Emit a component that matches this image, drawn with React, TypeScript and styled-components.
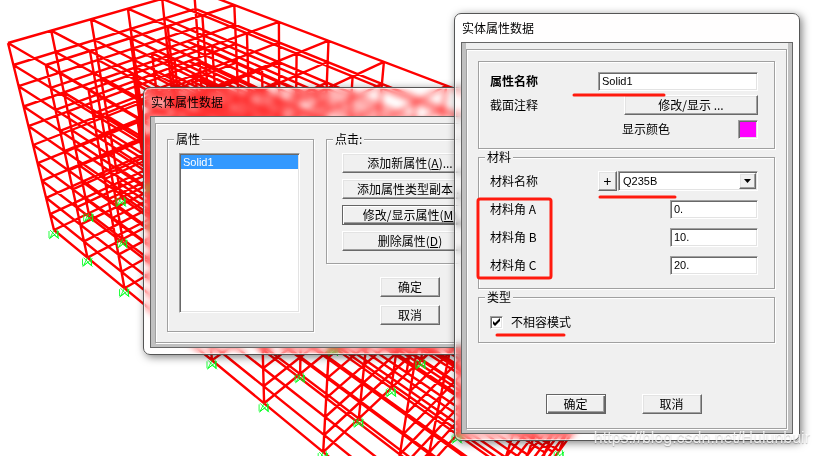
import React from 'react';
import styled, { createGlobalStyle, css } from 'styled-components';

const GlobalStyle = createGlobalStyle`
  *, *::before, *::after { box-sizing: border-box; }
  body { margin: 0; background: #fff; }
  body, button, input, select {
    font: 12px/16px "Noto Sans CJK SC", "Liberation Sans", sans-serif;
    color: #000;
  }
`;

const raised = css`
  border: 1px solid;
  border-color: #fff #696969 #696969 #fff;
  box-shadow: inset -1px -1px 0 #a0a0a0, inset 1px 1px 0 #e3e3e3;
  background: #f0f0f0;
`;

const sunken = css`
  border: 1px solid;
  border-color: #a0a0a0 #fff #fff #a0a0a0;
  box-shadow: inset 1px 1px 0 #696969, inset -1px -1px 0 #e3e3e3;
`;

const Desktop = styled.main`
  position: relative;
  height: 100vh;
  overflow: hidden;
`;

const ModelView = styled.svg`
  position: absolute;
  inset: 0;
  width: 100%;
  height: 100%;
`;

const Window = styled.section<{ $x: number; $y: number; $w: number }>`
  position: absolute;
  left: ${(p) => p.$x}px;
  top: ${(p) => p.$y}px;
  width: ${(p) => p.$w}px;
  padding: 0 6px 6px;
  border: 1px solid #555;
  border-radius: 7px;
  background: rgba(255, 250, 250, 0.16);
  backdrop-filter: blur(3px);
  box-shadow: inset 0 0 0 1px rgba(255, 255, 255, 0.6), 2px 2px 8px rgba(0, 0, 0, 0.5);
`;

const TitleBar = styled.h2`
  margin: 0;
  height: 28px;
  padding-left: 1px;
  font-size: 12px;
  font-weight: 400;
  line-height: 28px;
`;

const Client = styled.div`
  border: 1px solid #666;
  background: linear-gradient(#efefef, #efefef) 4px 0 / calc(100% - 8px) 12px no-repeat #c0c0c0;
  padding: 6px 5px 4px 4px;
`;

const Panel = styled.form<{ $top: number; $bottom: number }>`
  padding: ${(p) => p.$top}px 11px ${(p) => p.$bottom}px;
  border: 1px solid #a0a0a0;
  background: #f0f0f0;
  box-shadow: inset 1px 1px 0 #fff, 1px 1px 0 #fff;
`;

const Columns = styled.div`
  display: flex;
  align-items: flex-start;
  gap: 12px;
`;

const ActionColumn = styled.div`
  flex: 1;
  display: flex;
  flex-direction: column;
  gap: 13px;
`;

const GroupStack = styled.div`
  display: flex;
  flex-direction: column;
  gap: 2px;
`;

const Group = styled.fieldset`
  margin: 0;
  min-width: 0;
  padding: 0 6px;
  border: 1px solid #a0a0a0;
  box-shadow: inset 1px 1px 0 #fff, 1px 1px 0 #fff;
`;

const Legend = styled.legend`
  padding: 0 2px;
  height: 12px;
  line-height: 12px;
  background: #f0f0f0;
`;

const ListBody = styled.div`
  padding: 8px 10px 18px 5px;
`;

const ListBox = styled.ul`
  ${sunken}
  margin: 0;
  padding: 1px;
  width: 121px;
  height: 160px;
  list-style: none;
  background: #fff;
`;

const ListItem = styled.li`
  padding-left: 2px;
  line-height: 14px;
  font-family: "Liberation Sans", sans-serif;
  font-size: 11px;
  color: #fff;
  background: #3399ff;
`;

const ButtonStack = styled.div`
  display: flex;
  flex-direction: column;
  gap: 6px;
  padding: 8px 9px 12px;
`;

const Button = styled.button<{ $default?: boolean }>`
  ${raised}
  height: 20px;
  min-width: 60px;
  padding: 0 4px;
  line-height: 16px;
  white-space: nowrap;
  ${(p) =>
    p.$default &&
    css`
      border-color: #646464;
      box-shadow: inset 1px 1px 0 #fff, inset -1px -1px 0 #696969, inset -2px -2px 0 #a0a0a0;
    `}
`;

const ConfirmStack = styled.div`
  display: flex;
  flex-direction: column;
  gap: 8px;
  padding: 0 54px;
  align-items: flex-start;
`;

const ConfirmRow = styled.div`
  display: flex;
  justify-content: center;
  gap: 36px;
  margin-top: 51px;
  padding-right: 6px;
`;

const Rows = styled.div<{ $gap: number; $top: number; $bottom: number }>`
  display: flex;
  flex-direction: column;
  gap: ${(p) => p.$gap}px;
  padding: ${(p) => p.$top}px 10px ${(p) => p.$bottom}px 5px;
`;

const Row = styled.div`
  display: flex;
  align-items: center;
  justify-content: space-between;
  height: 20px;
`;

const Label = styled.label<{ $bold?: boolean }>`
  font-weight: ${(p) => (p.$bold ? 700 : 400)};
  line-height: 20px;
`;

const TextField = styled.input<{ $wide?: boolean }>`
  ${sunken}
  width: ${(p) => (p.$wide ? 160 : 88)}px;
  height: 19px;
  padding: 0 3px;
  font-family: "Liberation Sans", sans-serif;
  font-size: 11px;
  background: #fff;
  outline: none;
`;

const WideButton = styled(Button)`
  width: 134px;
`;

const ColourRow = styled(Row)`
  padding-left: 132px;
`;

const Swatch = styled.input`
  ${sunken}
  appearance: none;
  width: 20px;
  height: 19px;
  padding: 1px;
  background: #f0f0f0;
  &::-webkit-color-swatch-wrapper { padding: 0; }
  &::-webkit-color-swatch { border: 0; }
`;

const Combo = styled.div`
  display: flex;
  gap: 1px;
`;

const PlusButton = styled(Button)`
  min-width: 0;
  width: 19px;
  padding: 0;
  font-size: 14px;
`;

const SelectWrap = styled.div`
  position: relative;
`;

const Select = styled.select`
  ${sunken}
  appearance: none;
  display: block;
  width: 140px;
  height: 20px;
  padding: 0 20px 0 4px;
  font-family: "Liberation Sans", sans-serif;
  font-size: 11px;
  border-radius: 0;
  background: #fff;
  outline: none;
`;

const Arrow = styled.span`
  ${raised}
  position: absolute;
  top: 2px;
  right: 2px;
  bottom: 2px;
  width: 17px;
  display: grid;
  place-items: center;
  pointer-events: none;
`;

const CheckRow = styled.label`
  display: flex;
  align-items: center;
  gap: 8px;
  height: 14px;
  line-height: 14px;
`;

const CheckBox = styled.input`
  ${sunken}
  appearance: none;
  flex: none;
  width: 13px;
  height: 13px;
  margin: 0;
  background: #fff;
  &:checked {
    background: #fff
      url("data:image/svg+xml,%3Csvg xmlns='http://www.w3.org/2000/svg' viewBox='0 0 11 11'%3E%3Cpath d='M2 4v3l2 2 5-5V1L4 6z'/%3E%3C/svg%3E")
      center / 11px 11px no-repeat;
  }
`;

const Marks = styled.svg`
  position: absolute;
  inset: 0;
  width: 100%;
  height: 100%;
  pointer-events: none;
`;

const Watermark = styled.p`
  position: absolute;
  right: 10px;
  bottom: 8px;
  margin: 0;
  font: 16px/20px "Liberation Sans", sans-serif;
  color: rgba(255, 255, 255, 0.8);
  text-shadow: 0 1px 1px rgba(0, 0, 0, 0.25);
`;

const BAYS_I = 8;
const BAYS_J = 5;
const FLOORS = 10;

// Perspective projection of a grid node; k counts the floors from the roof down.
function project(i: number, j: number, k: number) {
  const w = 1 - 0.058 * i + 0.0417 * j + 0.02 * k;
  const x = (8 + 35.1 * i + 45.3 * j + 5.68 * k) / w;
  const y = (43 + 18.2 * i - 11.1 * j + 23.3 * k) / w;
  return `${x.toFixed(1)} ${y.toFixed(1)}`;
}

function framePath() {
  const parts: string[] = [];
  const line = (a: string, b: string) => parts.push(`M${a}L${b}`);
  for (let i = 0; i <= BAYS_I; i++)
    for (let j = 0; j <= BAYS_J; j++) line(project(i, j, 0), project(i, j, FLOORS));
  for (let k = 0; k <= FLOORS; k++) {
    for (let i = 0; i <= BAYS_I; i++) line(project(i, 0, k), project(i, BAYS_J, k));
    for (let j = 0; j <= BAYS_J; j++) line(project(0, j, k), project(BAYS_I, j, k));
  }
  // Secondary beams and posts of the inner corridor.
  for (let k = 1; k < FLOORS; k++) {
    line(project(1, 2.5, k), project(BAYS_I, 2.5, k));
    line(project(1, 3.5, k), project(BAYS_I, 3.5, k));
  }
  for (let i = 1; i < BAYS_I; i++) line(project(i, 2.5, 1), project(i, 2.5, FLOORS));
  return parts.join('');
}

function supportPath() {
  const parts: string[] = [];
  for (let i = 0; i <= BAYS_I; i++)
    for (let j = 0; j <= BAYS_J; j++)
      parts.push(`M${project(i, j, FLOORS)}m-4 0l9 9m-10 0l10 -8m-5 -1l-4 8l4 -3l4 3l-1 -9m-8 2v7m9 -7v7`);
  return parts.join('');
}

const Frame = () => (
  <ModelView aria-hidden="true">
    <path d={framePath()} fill="none" stroke="#ff0000" strokeWidth="2.4" />
    <path d={supportPath()} fill="none" stroke="#00ff20" strokeWidth="1" opacity="0.85" />
  </ModelView>
);

const PropertyListWindow = () => (
  <Window $x={143} $y={87} $w={376}>
    <TitleBar>实体属性数据</TitleBar>
    <Client>
      <Panel $top={9} $bottom={10} onSubmit={(e) => e.preventDefault()}>
        <Columns>
          <Group>
            <Legend>属性</Legend>
            <ListBody>
              <ListBox>
                <ListItem>Solid1</ListItem>
              </ListBox>
            </ListBody>
          </Group>
          <ActionColumn>
            <Group>
              <Legend>点击:</Legend>
              <ButtonStack>
                <Button type="button">添加新属性(<u>A</u>)...</Button>
                <Button type="button">添加属性类型副本...</Button>
                <Button type="button" $default>修改/显示属性(<u>M</u>)</Button>
                <Button type="button">删除属性(<u>D</u>)</Button>
              </ButtonStack>
            </Group>
            <ConfirmStack>
              <Button type="submit">确定</Button>
              <Button type="button">取消</Button>
            </ConfirmStack>
          </ActionColumn>
        </Columns>
      </Panel>
    </Client>
  </Window>
);

const angles = [
  { id: 'A', value: '0.' },
  { id: 'B', value: '10.' },
  { id: 'C', value: '20.' },
];

const PropertyDataWindow = () => (
  <Window $x={454} $y={13} $w={346}>
    <TitleBar>实体属性数据</TitleBar>
    <Client>
      <Panel $top={11} $bottom={14} onSubmit={(e) => e.preventDefault()}>
        <GroupStack>
          <Group>
            <Rows $gap={4} $top={9} $bottom={9}>
              <Row>
                <Label $bold htmlFor="name">属性名称</Label>
                <TextField $wide id="name" defaultValue="Solid1" />
              </Row>
              <Row>
                <Label htmlFor="notes">截面注释</Label>
                <WideButton type="button" id="notes">修改/显示 ...</WideButton>
              </Row>
              <ColourRow>
                <Label htmlFor="colour">显示颜色</Label>
                <Swatch type="color" id="colour" defaultValue="#ff00ff" />
              </ColourRow>
            </Rows>
          </Group>
          <Group>
            <Legend>材料</Legend>
            <Rows $gap={8} $top={8} $bottom={13}>
              <Row>
                <Label htmlFor="material">材料名称</Label>
                <Combo>
                  <PlusButton type="button">+</PlusButton>
                  <SelectWrap>
                    <Select id="material" defaultValue="Q235B">
                      <option>Q235B</option>
                    </Select>
                    <Arrow>
                      <svg width="7" height="4" viewBox="0 0 7 4" aria-hidden="true">
                        <path d="M0 0h7L3.5 4z" />
                      </svg>
                    </Arrow>
                  </SelectWrap>
                </Combo>
              </Row>
              {angles.map((a) => (
                <Row key={a.id}>
                  <Label htmlFor={`angle${a.id}`}>材料角 {a.id}</Label>
                  <TextField id={`angle${a.id}`} defaultValue={a.value} />
                </Row>
              ))}
            </Rows>
          </Group>
          <Group>
            <Legend>类型</Legend>
            <Rows $gap={0} $top={12} $bottom={13}>
              <CheckRow>
                <CheckBox type="checkbox" defaultChecked />
                不相容模式
              </CheckRow>
            </Rows>
          </Group>
        </GroupStack>
        <ConfirmRow>
          <Button type="submit" $default>确定</Button>
          <Button type="button">取消</Button>
        </ConfirmRow>
      </Panel>
    </Client>
    <Marks aria-hidden="true">
      <g fill="none" stroke="#ff1a0e" strokeWidth="3" strokeLinecap="round" strokeLinejoin="round">
        <path d="M119 81H209" />
        <path d="M145 183H220" />
        <rect x="23" y="185" width="73" height="79" rx="2" />
        <path d="M42 321H109" />
      </g>
    </Marks>
  </Window>
);

export default function App() {
  return (
    <Desktop>
      <GlobalStyle />
      <Frame />
      <PropertyListWindow />
      <PropertyDataWindow />
      <Watermark>https://blog.csdn.net/Hulunbuir</Watermark>
    </Desktop>
  );
}
